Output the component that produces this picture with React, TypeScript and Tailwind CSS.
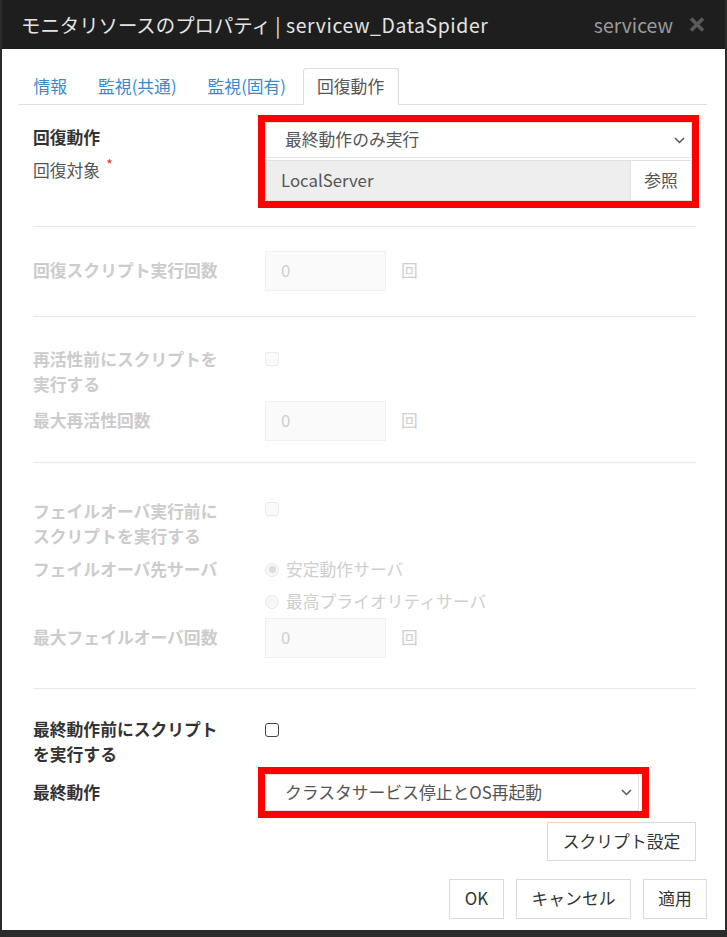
import React from 'react';

const Chevron = () => (
  <svg width="11" height="7" viewBox="0 0 11 7" aria-hidden>
    <path d="M1 1l4.5 4.5L10 1" fill="none" stroke="#555" strokeWidth="1.5" />
  </svg>
);

const CloseIcon = () => (
  <svg width="16" height="17" viewBox="0 0 16 17" aria-hidden>
    <path d="M2 2.5l12 12M14 2.5l-12 12" stroke="#5a5a5a" strokeWidth="3.6" />
  </svg>
);

function Tab({ label, active }: { label: string; active?: boolean }) {
  return (
    <div
      className={[
        'h-[37px] -mb-px mr-[2px] px-[13.5px] flex items-center border rounded-t-[3px]',
        active
          ? 'border-[#dddddd] border-b-white bg-white text-[#555]'
          : 'border-transparent text-[#3a8ad0]',
      ].join(' ')}
    >
      {label}
    </div>
  );
}

function CountInput() {
  return (
    <div className="flex items-center">
      <div className="w-[121px] h-[40px] bg-[#fafafa] border border-[#f0f0f0] flex items-center pl-[15px] text-[#cfcfcf]">
        0
      </div>
      <span className="ml-[15px] text-[#cfcfcf]">回</span>
    </div>
  );
}

function DisabledBox() {
  return <div className="w-[14px] h-[14px] rounded-[3px] border border-[#ececec] bg-[#fafafa]" />;
}

function Radio({ checked, label }: { checked?: boolean; label: string }) {
  return (
    <div className="flex items-center leading-[25px]">
      <div className="w-[14px] h-[14px] rounded-full border border-[#e8e8e8] bg-[#f7f7f7] flex items-center justify-center">
        {checked && <div className="w-[7px] h-[7px] rounded-full bg-[#dcdcdc]" />}
      </div>
      <span className="ml-[7px] text-[#cfcfcf]">{label}</span>
    </div>
  );
}

const Divider = ({ mt }: { mt: string }) => <div className={`${mt} border-t border-[#e8e8e8]`} />;

export default function App() {
  return (
    <div className="w-[727px] h-[937px] bg-[#2b2b2b] pl-[2px] font-['Noto_Sans_CJK_JP','Noto_Sans',sans-serif] text-[16.8px]">
      <div className="w-[723px] h-[930px] bg-white flex flex-col">
        {/* title bar */}
        <div className="h-[49px] shrink-0 bg-[#1e1e1e] flex items-center pl-[19px] pr-[20px]">
          <span className="text-[19.4px] text-[#e4e4e4]">
            モニタリソースのプロパティ <span className="tracking-[0.6px]">| servicew_DataSpider</span>
          </span>
          <span className="ml-auto text-[19.4px] text-[#9a9a9a]">servicew</span>
          <span className="ml-[16px] flex items-center">
            <CloseIcon />
          </span>
        </div>

        {/* tabs */}
        <div className="mt-[19px] ml-[17px] mr-[18px] h-[37px] flex border-b border-[#dddddd]">
          <Tab label="情報" />
          <Tab label="監視(共通)" />
          <Tab label="監視(固有)" />
          <Tab label="回復動作" active />
        </div>

        <div className="pl-[31px] pr-[29px] flex flex-col">
          {/* recovery action */}
          <div className="mt-[17px] flex">
            <div className="w-[232px] pt-[3px]">
              <div className="font-bold text-[#333] leading-[25px]">回復動作</div>
              <div className="mt-[8px] text-[#555] leading-[25px]">
                回復対象
                <span className="ml-[6px] relative -top-[7px] text-[14px] text-[#e0301e]">*</span>
              </div>
            </div>
            <div className="w-[427px] outline-solid outline-[7px] outline-[#ff0000]">
              <div className="h-[36px] border border-[#e3e3e3] flex items-center justify-between pl-[19px] pr-[6px] text-[#555]">
                最終動作のみ実行
                <Chevron />
              </div>
              <div className="mt-[2px] h-[41px] flex">
                <div className="flex-1 bg-[#eeeeee] border border-[#e0e0e0] flex items-center pl-[15px] text-[#555]">
                  LocalServer
                </div>
                <div className="w-[61px] border border-l-0 border-[#e0e0e0] flex items-center justify-center text-[#555]">
                  参照
                </div>
              </div>
            </div>
          </div>

          <Divider mt="mt-[25px]" />

          <div className="mt-[24px] flex items-center h-[40px]">
            <div className="w-[232px] font-bold text-[#cccccc]">回復スクリプト実行回数</div>
            <CountInput />
          </div>

          <Divider mt="mt-[25px]" />

          {/* reactivation */}
          <div className="mt-[30px] flex items-start">
            <div className="w-[232px] font-bold text-[#cccccc] leading-[25px]">
              再活性前にスクリプトを
              <br />
              実行する
            </div>
            <div className="mt-[5px]">
              <DisabledBox />
            </div>
          </div>
          <div className="mt-[4px] flex items-center h-[40px]">
            <div className="w-[232px] font-bold text-[#cccccc]">最大再活性回数</div>
            <CountInput />
          </div>

          <Divider mt="mt-[21px]" />

          {/* failover */}
          <div className="mt-[36px] flex items-start">
            <div className="w-[232px] font-bold text-[#cccccc] leading-[25px]">
              フェイルオーバ実行前に
              <br />
              スクリプトを実行する
            </div>
            <div className="mt-[3px]">
              <DisabledBox />
            </div>
          </div>
          <div className="mt-[8px] flex items-start">
            <div className="w-[232px] font-bold text-[#cccccc] leading-[25px]">フェイルオーバ先サーバ</div>
            <div className="flex flex-col gap-[7px]">
              <Radio checked label="安定動作サーバ" />
              <Radio label="最高プライオリティサーバ" />
            </div>
          </div>
          <div className="mt-[4px] flex items-center h-[40px]">
            <div className="w-[232px] font-bold text-[#cccccc]">最大フェイルオーバ回数</div>
            <CountInput />
          </div>

          <Divider mt="mt-[30px]" />

          {/* final action */}
          <div className="mt-[28px] flex items-start">
            <div className="w-[232px] font-bold text-[#333] leading-[25px]">
              最終動作前にスクリプト
              <br />
              を実行する
            </div>
            <div className="mt-[6px] w-[14px] h-[14px] rounded-[3px] border-[1.5px] border-[#444] bg-white" />
          </div>
          <div className="mt-[7px] flex items-center">
            <div className="w-[232px] font-bold text-[#333]">最終動作</div>
            <div className="w-[377px] outline-solid outline-[7px] outline-[#ff0000]">
              <div className="w-[374px] h-[37px] border border-[#e3e3e3] flex items-center justify-between pl-[19px] pr-[6px] text-[#555]">
                クラスタサービス停止とOS再起動
                <Chevron />
              </div>
            </div>
          </div>

          <div className="mt-[11px] self-end w-[149px] h-[39px] border border-[#dadada] flex items-center justify-center text-[#333]">
            スクリプト設定
          </div>
        </div>

        <div className="mt-[18px] pr-[18px] flex justify-end gap-[12px] text-[#333]">
          <div className="w-[55px] h-[40px] border border-[#dadada] flex items-center justify-center">OK</div>
          <div className="w-[115px] h-[40px] border border-[#dadada] flex items-center justify-center">キャンセル</div>
          <div className="w-[64px] h-[40px] border border-[#dadada] flex items-center justify-center">適用</div>
        </div>
      </div>
    </div>
  );
}
